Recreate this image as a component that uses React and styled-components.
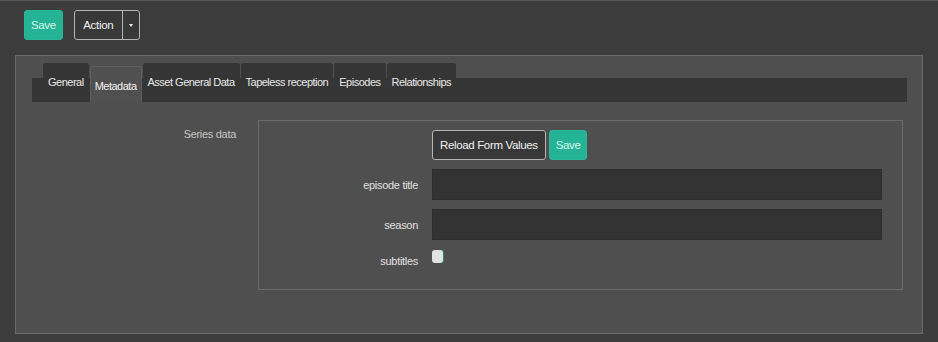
import React from 'react'
import styled, { createGlobalStyle } from 'styled-components'

const GlobalStyle = createGlobalStyle`
  html, body {
    margin: 0;
    padding: 0;
    background: #3c3c3c;
  }
  body {
    font-family: "Liberation Sans", Arial, sans-serif;
    font-size: 11px;
    letter-spacing: -0.3px;
    color: #e6e6e6;
  }
`

const tabs = ['General', 'Metadata', 'Asset General Data', 'Tapeless reception', 'Episodes', 'Relationships']

const Page = styled.div`
  width: 938px;
  height: 342px;
  box-sizing: border-box;
  border-top: 1px solid #575757;
  background: #3c3c3c;
  overflow: hidden;
`

const Toolbar = styled.div`
  display: flex;
  align-items: center;
  gap: 11px;
  padding: 9px 24px 0;
  height: 30px;
`

const Button = styled.button`
  font-family: inherit;
  font-size: 11.5px;
  letter-spacing: -0.35px;
  height: 30px;
  padding: 0 ${(p) => (p.$pad ? p.$pad : 7)}px;
  border-radius: 3px;
  cursor: pointer;
  display: flex;
  align-items: center;
  justify-content: center;
  background: ${(p) => (p.$primary ? '#24b394' : '#383838')};
  color: ${(p) => (p.$primary ? '#d8f7ef' : '#f0f0f0')};
  border: 1px solid ${(p) => (p.$primary ? '#27b898' : '#b4b4b4')};
`

const SplitButton = styled.div`
  display: flex;
  height: 30px;
  box-sizing: border-box;
  border: 1px solid #b4b4b4;
  border-radius: 3px;
  background: #383838;
  overflow: hidden;
  font-size: 11.5px;
`

const SplitMain = styled.span`
  display: flex;
  align-items: center;
  justify-content: center;
  width: 47px;
  color: #f0f0f0;
  border-right: 1px solid #b4b4b4;
`

const Caret = styled.span`
  width: 16px;
  display: flex;
  align-items: center;
  justify-content: center;
  &::after {
    content: '';
    border-left: 2.5px solid transparent;
    border-right: 2.5px solid transparent;
    border-top: 3px solid #eee;
  }
`

const Panel = styled.div`
  margin: 15px 15px 0;
  width: 908px;
  height: 279px;
  box-sizing: border-box;
  background: #4f4f4f;
  border: 1px solid #6a6a6a;
  padding: 7px 15px 0 16px;
`

const TabBar = styled.div`
  display: flex;
  align-items: flex-end;
  gap: 1px;
  height: 39px;
  padding-left: 11px;
  background: linear-gradient(to bottom, transparent 15px, #353535 15px);
`

const Tab = styled.div`
  height: ${(p) => (p.$active ? 36 : 39)}px;
  padding: 0 4px;
  display: flex;
  align-items: center;
  box-sizing: border-box;
  letter-spacing: -0.5px;
  background: ${(p) => (p.$active ? '#505050' : '#353535')};
  border: 1px solid ${(p) => (p.$active ? '#5e5e5e' : '#353535')};
  border-bottom: none;
  border-radius: 3px 3px 0 0;
  color: ${(p) => (p.$active ? '#f2f2f2' : '#e8e8e8')};
  white-space: nowrap;
  ${(p) => (p.$active ? 'padding-top: 2px;' : 'padding-bottom: 2px;')}
`

const FormRow = styled.div`
  display: flex;
  margin: 18px 4px 0 0;
`

const SectionLabel = styled.div`
  width: 204px;
  text-align: right;
  padding-top: 8px;
  color: #c4c4c4;
  margin-right: 22px;
`

const Fieldset = styled.div`
  flex: 1;
  height: 170px;
  box-sizing: border-box;
  border: 1px solid #6a6a6a;
  padding: 9px 20px 0 0;
  display: grid;
  grid-template-columns: 159px 1fr;
  column-gap: 14px;
  row-gap: 9px;
  align-content: start;
  align-items: center;
`

const FieldLabel = styled.div`
  text-align: right;
  color: #e0e0e0;
  ${(p) => (p.$top ? `align-self: start; padding-top: ${p.$top}px;` : '')}
`

const ButtonGroup = styled.div`
  display: flex;
  gap: 3px;
`

const Input = styled.div`
  height: 31px;
  box-sizing: border-box;
  background: #333333;
  border: 1px solid #2e2e2e;
`

const Checkbox = styled.span`
  display: block;
  align-self: start;
  width: 11px;
  height: 13px;
  margin-top: 1px;
  border-radius: 3px;
  background: #dfe3e2;
  box-shadow: 1px 0 0 #2e8a78;
`

const App = () => {
  return (
    <Page>
      <GlobalStyle />
      <Toolbar>
        <Button $primary $pad={6}>Save</Button>
        <SplitButton>
          <SplitMain>Action</SplitMain>
          <Caret />
        </SplitButton>
      </Toolbar>
      <Panel>
        <TabBar>
          {tabs.map((t) => (
            <Tab key={t} $active={t === 'Metadata'}>{t}</Tab>
          ))}
        </TabBar>
        <FormRow>
          <SectionLabel>Series data</SectionLabel>
          <Fieldset>
            <span />
            <ButtonGroup>
              <Button>Reload Form Values</Button>
              <Button $primary $pad={6}>Save</Button>
            </ButtonGroup>
            <FieldLabel>episode title</FieldLabel>
            <Input />
            <FieldLabel>season</FieldLabel>
            <Input />
            <FieldLabel $top={6}>subtitles</FieldLabel>
            <Checkbox />
          </Fieldset>
        </FormRow>
      </Panel>
    </Page>
  )
}

export default App
